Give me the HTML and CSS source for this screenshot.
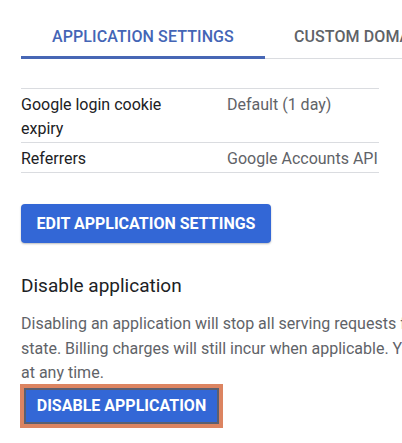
FILE: index.html
```html
<!DOCTYPE html>
<html>
<head>
<meta charset="utf-8">
<link rel="stylesheet" href="styles.css">
</head>
<body>
<div class="page">
  <div class="tabs">
    <div class="tab active">APPLICATION SETTINGS</div>
    <div class="tab next">CUSTOM DOMAINS</div>
  </div>
  <table class="props">
    <tr>
      <td class="label">Google login cookie expiry</td>
      <td class="value">Default (1 day)</td>
    </tr>
    <tr>
      <td class="label">Referrers</td>
      <td class="value">Google Accounts API</td>
    </tr>
  </table>
  <button class="btn edit">EDIT APPLICATION SETTINGS</button>
  <h2 class="heading">Disable application</h2>
  <p class="desc">Disabling an application will stop all serving requests for that application, but it will maintain data and<br>state. Billing charges will still incur when applicable. You can re-enable your application<br>at any time.</p>
  <div class="focus-ring">
    <button class="btn disable">DISABLE APPLICATION</button>
  </div>
</div>
</body>
</html>
```

FILE: styles.css
```css
html, body {
  margin: 0;
  padding: 0;
  background: #ffffff;
  overflow: hidden;
}
body {
  font-family: Roboto, "Liberation Sans", sans-serif;
  width: 402px;
  height: 443px;
}
.page {
  padding-left: 21px;
}
.tabs {
  display: flex;
  border-bottom: 1px solid #dadce0;
  white-space: nowrap;
  margin-right: -200px;
}
.tab {
  font-size: 16px;
  font-weight: 500;
  line-height: 20px;
  padding: 27px 31px 9px;
  color: #5f6368;
  border-bottom: 3px solid transparent;
  margin-bottom: -1px;
  letter-spacing: 0.1px;
}
.tab.next {
  padding-left: 29px;
}
.tab.active {
  color: #4465b6;
  border-bottom-color: #4767b5;
}
.props {
  margin-top: 29px;
  width: 358px;
  table-layout: fixed;
  border-collapse: collapse;
  border-top: 1px solid #dadce0;
  font-size: 16px;
  line-height: 24px;
}
.props td {
  border-bottom: 1px solid #dadce0;
  padding: 4px 0 1px;
  vertical-align: top;
}
.props .label {
  width: 176px;
  padding-right: 30px;
  color: #202124;
}
.props .value {
  color: #5f6368;
  white-space: nowrap;
}
.btn {
  font-family: Roboto, "Liberation Sans", sans-serif;
  font-weight: 700;
  color: #ffffff;
  background: #3367d6;
  border: none;
  cursor: pointer;
}
.edit {
  display: block;
  margin-top: 31px;
  height: 39px;
  width: 250px;
  font-size: 16px;
  border-radius: 4px;
  padding: 0;
  box-shadow: 0 1px 2px rgba(60, 64, 67, 0.35);
}
.heading {
  margin: 31px 0 0;
  font-size: 19px;
  font-weight: 400;
  line-height: 24px;
  color: #202124;
}
.desc {
  margin: 14px 0 0;
  font-size: 16px;
  line-height: 24.5px;
  color: #5f6368;
  white-space: nowrap;
}
.focus-ring {
  display: inline-block;
  margin-top: -2px;
  margin-left: -1px;
  border: 4px solid #dc8461;
}
.disable {
  display: block;
  height: 36px;
  width: 195px;
  padding: 0;
  font-size: 16px;
  border: 2px solid #5a5f70;
}
```
